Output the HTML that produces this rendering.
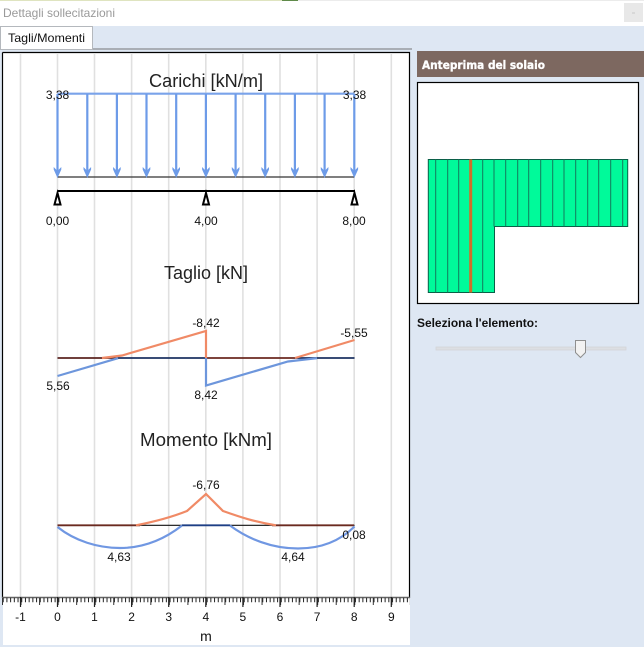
<!DOCTYPE html>
<html lang="it">
<head>
<meta charset="utf-8">
<title>Dettagli sollecitazioni</title>
<style>
html,body{margin:0;padding:0;width:644px;height:647px;overflow:hidden;background:#dee7f3}
svg{display:block;position:absolute;left:0;top:0}
text{font-family:"Liberation Sans",sans-serif;fill:#111}
.t{font-size:12px;text-anchor:middle}
.h{font-size:18px;text-anchor:middle;fill:#222}
</style>
</head>
<body>
<svg width="644" height="647" viewBox="0 0 644 647" xmlns="http://www.w3.org/2000/svg">
<!-- window chrome -->
<rect x="0" y="0" width="644" height="26" fill="#fff"/>
<rect x="0" y="0" width="282" height="1" fill="#dfe4c0"/>
<rect x="282" y="0" width="16" height="1" fill="#5f8a4a"/>
<rect x="298" y="0" width="346" height="1" fill="#ececec"/>
<text x="3" y="17" font-size="12" style="fill:#9a9a9a" textLength="112" lengthAdjust="spacingAndGlyphs">Dettagli sollecitazioni</text>
<rect x="624" y="3" width="19" height="19" fill="#e8e8e8"/>
<rect x="632" y="12" width="3" height="2" fill="#d8d8d8"/>

<!-- tab strip -->
<rect x="0" y="48" width="412" height="2" fill="#a9aeb5"/>
<rect x="0.5" y="26.5" width="92" height="23" fill="#fff" stroke="#b4b8bd"/>
<text x="8" y="42" font-size="12" style="fill:#111" textLength="77" lengthAdjust="spacingAndGlyphs">Tagli/Momenti</text>

<!-- chart panel -->
<rect x="3" y="53" width="407" height="592" fill="#fff"/>
<path d="M2.5 52.5H409.5V598M2.5 52.5V598" fill="none" stroke="#000" stroke-width="1.2"/>

<!-- gridlines -->
<g stroke="#e0e0e0" stroke-width="1.6">
<path d="M20.5 53V597M57.5 53V597M94.5 53V597M131.6 53V597M168.7 53V597M205.8 53V597M242.9 53V597M280 53V597M317.1 53V597M354.2 53V597M391.3 53V597"/>
</g>

<!-- titles -->
<text class="h" x="206" y="87" textLength="114" lengthAdjust="spacingAndGlyphs">Carichi [kN/m]</text>
<text class="h" x="206" y="279" textLength="84" lengthAdjust="spacingAndGlyphs">Taglio [kN]</text>
<text class="h" x="206" y="446" textLength="132" lengthAdjust="spacingAndGlyphs">Momento [kNm]</text>

<!-- loads -->
<path d="M57.5 177H354.5" stroke="#333" stroke-width="1.2" fill="none"/>
<path d="M57.5 93.7H354.5" stroke="#7aa3ea" stroke-width="2.2" fill="none"/>
<g stroke="#6d9be8" stroke-width="2.2" fill="none">
<path d="M57.5 94V172M87.3 94V172M116.9 94V172M146.5 94V172M176.2 94V172M205.9 94V172M235.6 94V172M265.2 94V172M294.9 94V172M324.6 94V172M354.3 94V172"/>
</g>
<g fill="#6d9be8">
<path d="M53.7 167L57.5 171L61.3 167V169.5L57.5 178L53.7 169.5Z"/>
<path d="M83.5 167L87.3 171L91.1 167V169.5L87.3 178L83.5 169.5Z"/>
<path d="M113.1 167L116.9 171L120.7 167V169.5L116.9 178L113.1 169.5Z"/>
<path d="M142.7 167L146.5 171L150.3 167V169.5L146.5 178L142.7 169.5Z"/>
<path d="M172.4 167L176.2 171L180 167V169.5L176.2 178L172.4 169.5Z"/>
<path d="M202.1 167L205.9 171L209.7 167V169.5L205.9 178L202.1 169.5Z"/>
<path d="M231.8 167L235.6 171L239.4 167V169.5L235.6 178L231.8 169.5Z"/>
<path d="M261.4 167L265.2 171L269 167V169.5L265.2 178L261.4 169.5Z"/>
<path d="M291.1 167L294.9 171L298.7 167V169.5L294.9 178L291.1 169.5Z"/>
<path d="M320.8 167L324.6 171L328.4 167V169.5L324.6 178L320.8 169.5Z"/>
<path d="M350.5 167L354.3 171L358.1 167V169.5L354.3 178L350.5 169.5Z"/>
</g>
<text class="t" x="57.5" y="99">3,38</text>
<text class="t" x="354.5" y="99">3,38</text>

<!-- beam & supports -->
<path d="M57.5 191H355" stroke="#000" stroke-width="2" fill="none"/>
<g fill="#fff" stroke="#000" stroke-width="2" stroke-linejoin="miter">
<path d="M57.5 193L60.5 204.5H54.5Z"/>
<path d="M206 193L209 204.5H203Z"/>
<path d="M354.5 193L357.5 204.5H351.5Z"/>
</g>
<text class="t" x="57.5" y="225">0,00</text>
<text class="t" x="206" y="225">4,00</text>
<text class="t" x="354" y="225">8,00</text>

<!-- shear -->
<path d="M57.5 358H118" stroke="#5c2420" stroke-width="1.8" fill="none"/>
<path d="M118 358H206" stroke="#1d3263" stroke-width="1.8" fill="none"/>
<path d="M206 358H295" stroke="#6b2a20" stroke-width="1.8" fill="none"/>
<path d="M295 358H354.5" stroke="#1d3263" stroke-width="1.8" fill="none"/>
<g fill="none" stroke="#f08a66" stroke-width="2.2">
<path d="M102 358L122 355.5L206 331V358"/>
<path d="M295 358L354.5 340"/>
</g>
<g fill="none" stroke="#6d96dc" stroke-width="2.2">
<path d="M57.5 376L118 358.2"/>
<path d="M206 358V385.5L288 361.5L317 358.2"/>
</g>
<text class="t" x="206" y="327">-8,42</text>
<text class="t" x="58" y="390">5,56</text>
<text class="t" x="206" y="399">8,42</text>
<text class="t" x="354" y="337">-5,55</text>

<!-- moment -->
<path d="M57.5 525.3H354.5" stroke="#111" stroke-width="1.2" fill="none"/>
<path d="M182 525.3H230" stroke="#1d3f85" stroke-width="1.8" fill="none"/>
<path d="M57.5 525.3H140M272 525.3H354" stroke="#6b2a20" stroke-width="1.8" fill="none"/>
<g fill="none" stroke="#f08a66" stroke-width="2.2">
<path d="M136 525.3C158 521 172 517 187 511L206 494L223 511C240 517 255 522 276 525.3"/>
</g>
<g fill="none" stroke="#7097e2" stroke-width="2.2">
<path d="M57.5 527C75 541 98 548 120 548C145 548 166 538 182 525.5"/>
<path d="M230 525.5C248 539 272 548.5 298 548.5C322 548.5 340 541 354.5 526.5"/>
</g>
<text class="t" x="206" y="489">-6,76</text>
<text class="t" x="119" y="561">4,63</text>
<text class="t" x="293" y="561">4,64</text>
<text class="t" x="354" y="539">0,08</text>

<!-- axis -->
<path d="M2 597.5H410" stroke="#666" stroke-width="1.4" fill="none"/>
<path d="M2.7 600H410" stroke="#222" stroke-width="4.5" stroke-dasharray="1 2.708" fill="none"/>
<path d="M2 601.5H410" stroke="#333" stroke-width="7" stroke-dasharray="1 17.54" fill="none"/>
<g stroke="#222" stroke-width="1.2" fill="none">
<path d="M20.5 597V607M57.5 597V607M94.5 597V607M131.6 597V607M168.7 597V607M205.8 597V607M242.9 597V607M280 597V607M317.1 597V607M354.2 597V607M391.3 597V607"/>
</g>
<g>
<text class="t" x="20.5" y="621">-1</text>
<text class="t" x="57.5" y="621">0</text>
<text class="t" x="94.5" y="621">1</text>
<text class="t" x="131.6" y="621">2</text>
<text class="t" x="168.7" y="621">3</text>
<text class="t" x="205.8" y="621">4</text>
<text class="t" x="242.9" y="621">5</text>
<text class="t" x="280" y="621">6</text>
<text class="t" x="317.1" y="621">7</text>
<text class="t" x="354.2" y="621">8</text>
<text class="t" x="391.3" y="621">9</text>
</g>
<text x="206" y="641" font-size="14" text-anchor="middle">m</text>

<!-- preview header -->
<rect x="417" y="51" width="227" height="26" fill="#7d6860"/>
<text x="422" y="69" font-size="11.5" font-weight="bold" stroke="#fff" stroke-width="0.35" style="font-family:'DejaVu Sans',sans-serif;fill:#fff" textLength="123" lengthAdjust="spacingAndGlyphs">Anteprima del solaio</text>

<!-- preview box -->
<rect x="417.5" y="82.5" width="221" height="221" fill="#fff" stroke="#000" stroke-width="1.2"/>
<path d="M428.3 159.5H627.7V226.5H494.5V292.5H428.3Z" fill="#00fa9a" stroke="#0a5f48" stroke-width="1"/>
<g stroke="#147a5c" stroke-width="1" fill="none">
<path d="M435.7 159.5V292.5M447.7 159.5V292.5M458.7 159.5V292.5M482.7 159.5V292.5M494 159.5V226.5"/>
<path d="M505.7 159.5V226.5M517.7 159.5V226.5M528.7 159.5V226.5M540.7 159.5V226.5M552.7 159.5V226.5M564 159.5V226.5M575.7 159.5V226.5M587.7 159.5V226.5M598.7 159.5V226.5M610.7 159.5V226.5M622.7 159.5V226.5"/>
</g>
<path d="M470.7 159.5V292.5" stroke="#cf6f2a" stroke-width="3" fill="none"/>

<!-- slider -->
<text x="417" y="327" font-size="12" font-weight="bold" style="fill:#111" textLength="121" lengthAdjust="spacingAndGlyphs">Seleziona l'elemento:</text>
<rect x="436" y="347" width="190" height="3" fill="#dcdfe3" stroke="#d2d4d8" stroke-width="0.8"/>
<path d="M575.5 340.5H585.5V352.5L580.5 357.5L575.5 352.5Z" fill="#f2f2f2" stroke="#8f8f8f" stroke-width="1"/>
</svg>
</body>
</html>
